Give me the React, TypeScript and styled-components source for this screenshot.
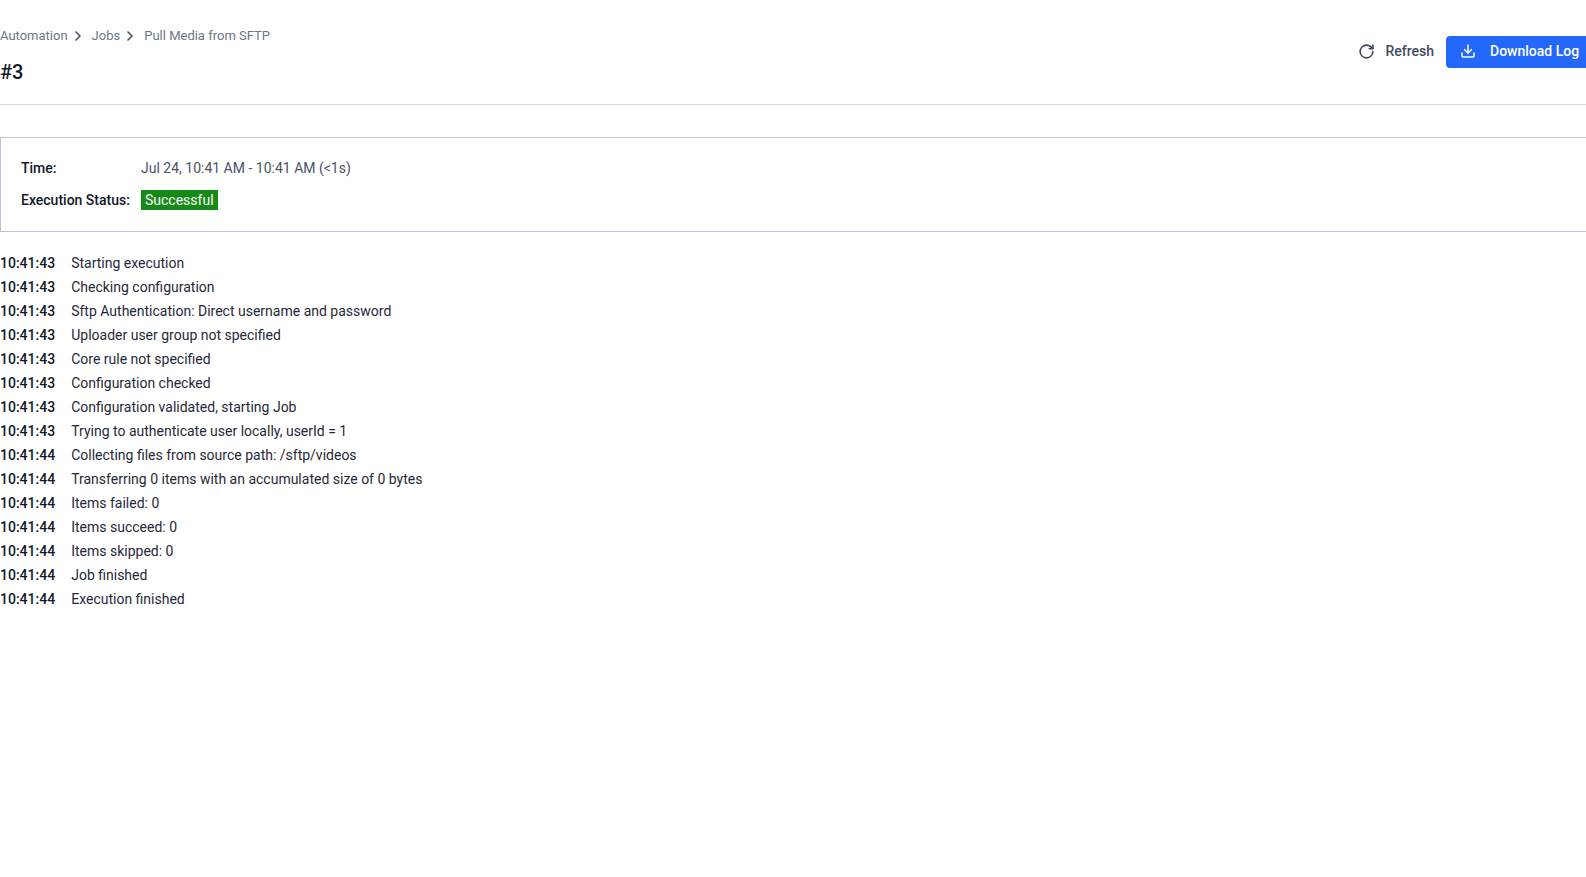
import React from "react";
import styled, { createGlobalStyle } from "styled-components";
import { ChevronRight, RotateCw, Download } from "lucide-react";

const Global = createGlobalStyle`
  html, body { margin: 0; padding: 0; background: #fff; }
  body { font-family: Roboto, "Liberation Sans", sans-serif; font-size: 14px; overflow: hidden; }
`;

const Page = styled.div`
  width: 1586px;
  height: 877px;
  display: flex;
  flex-direction: column;
  overflow: hidden;
`;

const Header = styled.header`
  height: 104px;
  box-sizing: content-box;
  border-bottom: 1px solid #d5d9e2;
  display: flex;
  justify-content: space-between;
`;

const TitleBlock = styled.div`
  display: flex;
  flex-direction: column;
  padding-top: 28px;
`;

const Crumbs = styled.nav`
  display: flex;
  align-items: center;
  height: 16px;
  color: #6b7688;
  font-size: 13px;
  line-height: 16px;
`;

const Sep = styled.span`
  display: inline-flex;
  width: 24px;
  padding-left: 2px;
  box-sizing: border-box;
  justify-content: flex-start;
  color: #4a5366;
`;

const Title = styled.h1`
  margin: 14px 0 0;
  font-size: 20px;
  line-height: 28px;
  font-weight: 500;
  color: #111827;
`;

const Actions = styled.div`
  display: flex;
  align-items: flex-start;
  padding-top: 36px;
  gap: 12px;
`;

const RefreshButton = styled.button`
  display: flex;
  align-items: center;
  gap: 10px;
  height: 32px;
  padding: 0 0 2px;
  border: 0;
  background: none;
  color: #3f4a5f;
  font: 500 14px Roboto, sans-serif;
`;

const DownloadButton = styled.button`
  display: flex;
  align-items: center;
  gap: 14px;
  width: 140px;
  height: 32px;
  padding: 0 0 2px 14px;
  border: 0;
  border-radius: 4px 0 0 4px;
  background: #2468fb;
  color: #fff;
  font: 500 14px Roboto, sans-serif;
`;

const Summary = styled.section`
  margin-top: 32px;
  height: 95px;
  box-sizing: border-box;
  border: 1px solid #b8c4dc;
  border-right: 0;
  padding: 14px 20px 0;
  display: grid;
  grid-template-columns: 120px 1fr;
  grid-auto-rows: 32px;
  align-items: center;
  flex-shrink: 0;
`;

const Label = styled.div`
  font-weight: 500;
  color: #111827;
`;

const Value = styled.div`
  color: #4a5366;
`;

const Badge = styled.span`
  display: inline-block;
  background: #168a16;
  color: #fff;
  padding: 0 4px;
  height: 20px;
  line-height: 20px;
`;

const Log = styled.div`
  margin-top: 19px;
  display: flex;
  flex-direction: column;
`;

const Row = styled.div`
  display: flex;
  height: 24px;
  align-items: center;
  color: #1f2937;
`;

const Stamp = styled.span`
  width: 71.2px;
  font-weight: 500;
  color: #111827;
`;

const logs: [string, string][] = [
  ["10:41:43", "Starting execution"],
  ["10:41:43", "Checking configuration"],
  ["10:41:43", "Sftp Authentication: Direct username and password"],
  ["10:41:43", "Uploader user group not specified"],
  ["10:41:43", "Core rule not specified"],
  ["10:41:43", "Configuration checked"],
  ["10:41:43", "Configuration validated, starting Job"],
  ["10:41:43", "Trying to authenticate user locally, userId = 1"],
  ["10:41:44", "Collecting files from source path: /sftp/videos"],
  ["10:41:44", "Transferring 0 items with an accumulated size of 0 bytes"],
  ["10:41:44", "Items failed: 0"],
  ["10:41:44", "Items succeed: 0"],
  ["10:41:44", "Items skipped: 0"],
  ["10:41:44", "Job finished"],
  ["10:41:44", "Execution finished"],
];

export default function App() {
  return (
    <Page>
      <Global />
      <Header>
        <TitleBlock>
          <Crumbs>
            <span>Automation</span>
            <Sep><ChevronRight size={16} strokeWidth={2.5} /></Sep>
            <span>Jobs</span>
            <Sep><ChevronRight size={16} strokeWidth={2.5} /></Sep>
            <span>Pull Media from SFTP</span>
          </Crumbs>
          <Title>#3</Title>
        </TitleBlock>
        <Actions>
          <RefreshButton><RotateCw size={17} strokeWidth={2.25} />Refresh</RefreshButton>
          <DownloadButton><Download size={16} strokeWidth={2.25} />Download Log</DownloadButton>
        </Actions>
      </Header>
      <Summary>
        <Label>Time:</Label>
        <Value>Jul 24, 10:41 AM - 10:41 AM (&lt;1s)</Value>
        <Label>Execution Status:</Label>
        <Value><Badge>Successful</Badge></Value>
      </Summary>
      <Log>
        {logs.map(([t, m], i) => (
          <Row key={i}><Stamp>{t}</Stamp><span>{m}</span></Row>
        ))}
      </Log>
    </Page>
  );
}
